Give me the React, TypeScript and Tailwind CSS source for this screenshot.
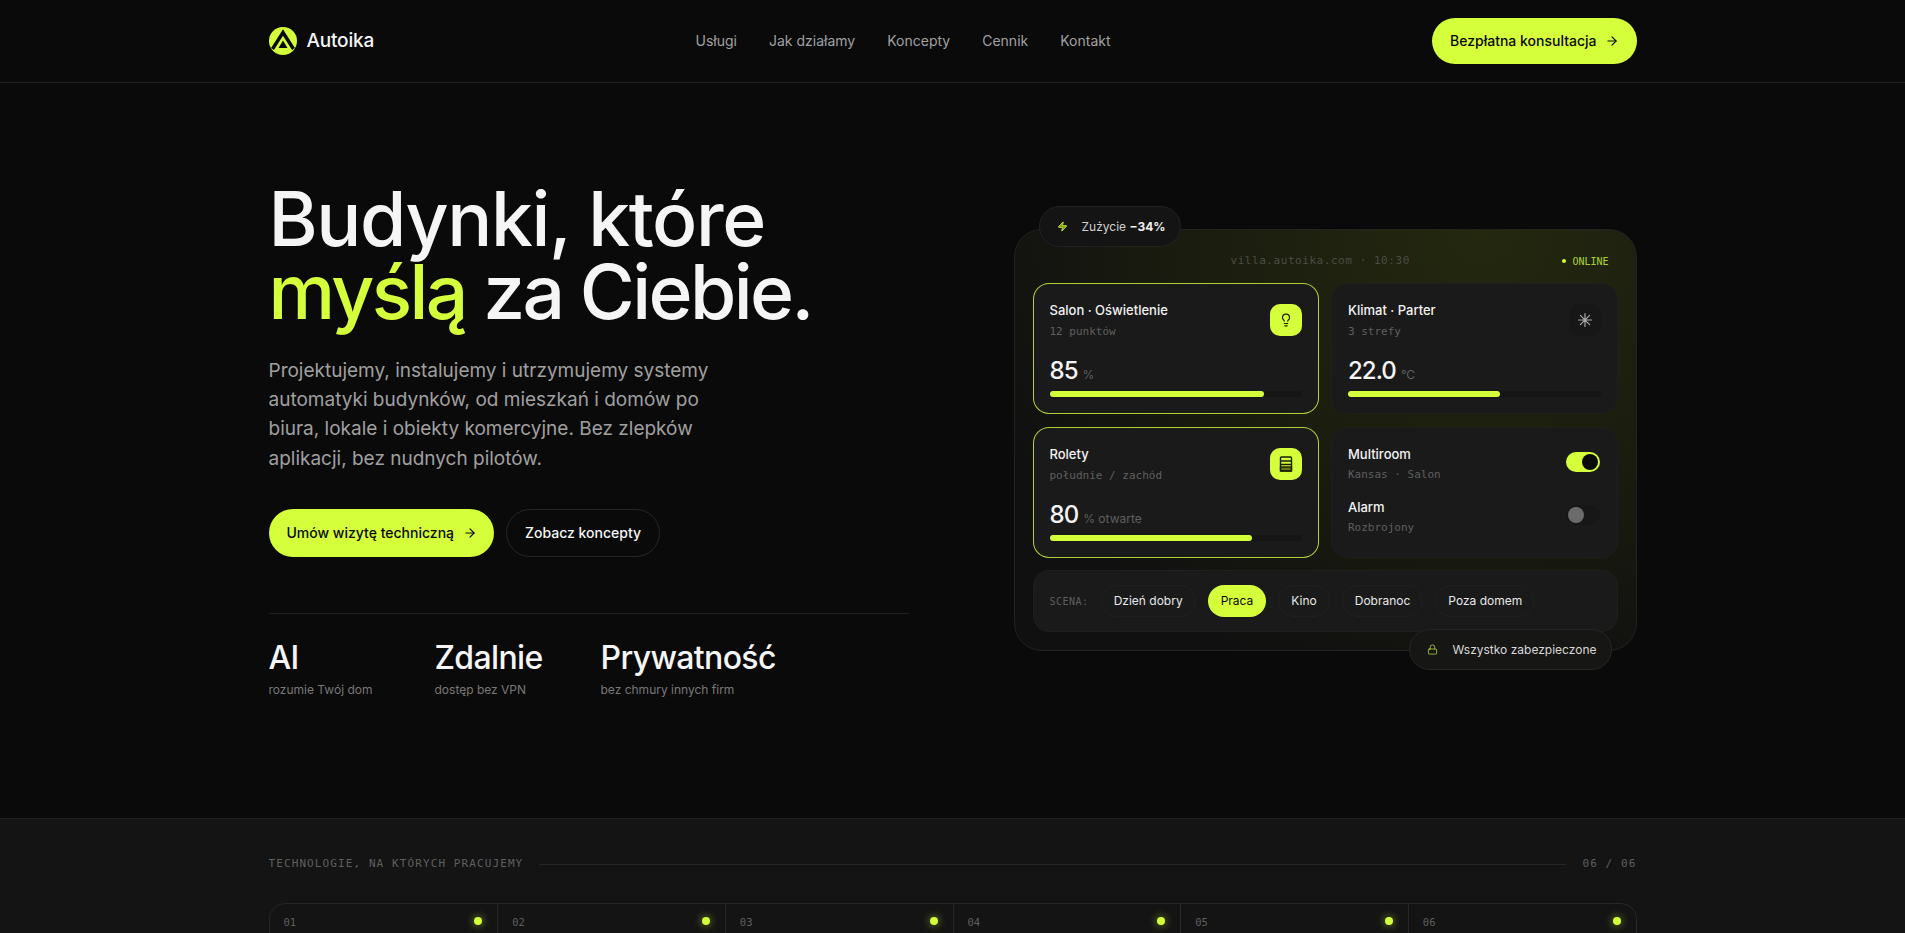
import { ArrowRight, Lightbulb, Lock, Zap } from "lucide-react";

const nav = ["Usługi", "Jak działamy", "Koncepty", "Cennik", "Kontakt"];
const scenes = ["Dzień dobry", "Praca", "Kino", "Dobranoc", "Poza domem"];
const stats = [
  { title: "AI", text: "rozumie Twój dom" },
  { title: "Zdalnie", text: "dostęp bez VPN" },
  { title: "Prywatność", text: "bez chmury innych firm" },
];
const techs = ["01", "02", "03", "04", "05", "06"];

const display = "font-['Inter',sans-serif]";
const mono = "font-['DejaVu_Sans_Mono',monospace]";

function Logo() {
  return (
    <svg width="28" height="28" viewBox="0 0 28 28">
      <circle cx="14" cy="14" r="14" fill="#d4ff3a" />
      <path d="M3.5 22 L14 5.5 L24.5 22" fill="none" stroke="#0a0a0a" strokeWidth="3.4" />
      <path d="M14 13.5 L18.5 21 H9.5 Z" fill="#0a0a0a" />
    </svg>
  );
}

function BlindsIcon() {
  return (
    <svg width="14" height="16" viewBox="0 0 14 16" fill="none" stroke="#1a1f08" strokeWidth="1.4">
      <rect x="1.5" y="1" width="11" height="14" rx="1" />
      <path d="M1.5 5h11M1.5 8.5h11" />
      <rect x="1.5" y="11" width="11" height="4" fill="#1a1f08" fillOpacity="0.6" />
    </svg>
  );
}

function ClimateIcon() {
  return (
    <svg width="16" height="16" viewBox="0 0 16 16" stroke="currentColor" strokeWidth="1.2" strokeLinecap="round">
      <path d="M8 1.5v13M1.5 8h13M3.4 3.4l9.2 9.2M12.6 3.4l-9.2 9.2" />
    </svg>
  );
}

function Bar({ pct }: { pct: number }) {
  return (
    <div className="mt-1 h-1.5 rounded-full bg-[#151515]">
      <div className="h-full rounded-full bg-[#d4ff3a]" style={{ width: `${pct}%` }} />
    </div>
  );
}

function Card({
  title,
  sub,
  value,
  unit,
  pct,
  active,
  icon,
}: {
  title: string;
  sub: string;
  value: string;
  unit: string;
  pct: number;
  active?: boolean;
  icon: React.ReactNode;
}) {
  return (
    <div
      className={`flex flex-col justify-between rounded-2xl border bg-[#1a1a1a] px-4 pb-4 pt-[20px] ${
        active ? "border-[#d4ff3a]/80" : "border-[#1f1f1f]"
      }`}
    >
      <div className="flex items-start justify-between">
        <div className="-mt-[3px]">
          <div className="text-[13px] font-medium leading-[18px] text-[#f2f2f2]">{title}</div>
          <div className={`${mono} mt-[5px] text-[11px] leading-[16px] text-[#5f5f5f]`}>{sub}</div>
        </div>
        <div
          className={`flex h-8 w-8 items-center justify-center rounded-[10px] ${
            active ? "bg-[#d4ff3a] text-[#1a1f08]" : "bg-[#171717] text-[#a8a8a8]"
          }`}
        >
          {icon}
        </div>
      </div>
      <div>
        <div className="flex items-baseline gap-[5px]">
          <span className={`${display} text-[24px] font-medium leading-[32px] tracking-[-0.04em] text-[#f5f5f5]`}>
            {value}
          </span>
          <span className="text-xs text-[#5f5f5f]">{unit}</span>
        </div>
        <Bar pct={pct} />
      </div>
    </div>
  );
}

function Toggle({ on }: { on?: boolean }) {
  return (
    <div
      className={`-mt-1 mr-[1px] flex h-5 w-[34px] items-center rounded-full p-[2px] ${
        on ? "justify-end bg-[#d4ff3a]" : "justify-start bg-[#171717]"
      }`}
    >
      <div className={`h-4 w-4 rounded-full ${on ? "bg-[#0a0a0a]" : "bg-[#6b6b6b]"}`} />
    </div>
  );
}

export default function App() {
  return (
    <div className="h-screen overflow-hidden bg-[#0a0a0a] font-['Inter',sans-serif] text-[#f5f5f5]">
      {/* Header */}
      <header className="border-b border-[#1f1f1f]">
        <div className="mx-auto flex h-[82px] w-[1368px] items-center justify-between">
          <div className="flex items-center gap-[10px]">
            <Logo />
            <span className={`${display} text-[19px] font-medium tracking-[-0.01em]`}>Autoika</span>
          </div>
          <nav className="flex gap-8">
            {nav.map((item) => (
              <a key={item} className="text-sm text-[#a0a0a0]">
                {item}
              </a>
            ))}
          </nav>
          <a className="-mr-px flex h-[46px] items-center gap-[9px] rounded-full bg-[#d4ff3a] px-[18px] text-sm font-medium text-[#0a0a0a]">
            Bezpłatna konsultacja
            <ArrowRight size={14} />
          </a>
        </div>
      </header>

      {/* Hero */}
      <section className="h-[735px]">
        <div className="mx-auto flex w-[1368px] justify-between">
          <div className="w-[640px] pt-[99px]">
            <h1 className={`${display} text-[75px] font-medium leading-[73px] tracking-[-0.035em]`}>
              <span className="tracking-[-1.4px]">Budynki, które</span>
              <br />
              <span className="text-[#d4ff3a]">myślą</span> za Ciebie.
            </h1>
            <p className="mt-[28px] w-[460px] text-[19px] leading-[29.2px] text-[#a0a0a0]">
              Projektujemy, instalujemy i utrzymujemy systemy automatyki budynków, od mieszkań i domów po biura, lokale
              i obiekty komercyjne. Bez zlepków aplikacji, bez nudnych pilotów.
            </p>
            <div className="mt-9 flex gap-3">
              <a className="flex h-12 items-center gap-[9px] rounded-full bg-[#d4ff3a] pl-[18px] pr-[17px] text-sm font-medium text-[#0a0a0a]">
                Umów wizytę techniczną
                <ArrowRight size={14} />
              </a>
              <a className="flex h-12 items-center rounded-full border border-[#262626] px-[18px] text-sm font-medium text-[#f5f5f5]">
                Zobacz koncepty
              </a>
            </div>
            <div className="mt-14 grid grid-cols-[166px_166px_auto] border-t border-[#1f1f1f] pt-[26px]">
              {stats.map((s) => (
                <div key={s.title}>
                  <div className={`${display} text-[32px] font-medium leading-[36px] tracking-[-0.02em]`}>{s.title}</div>
                  <div className="mt-[6px] text-xs text-[#787878]">{s.text}</div>
                </div>
              ))}
            </div>
          </div>

          {/* Dashboard mock */}
          <div className="relative mt-[146px] h-[422px] w-[623px] rounded-[28px] border border-[#222222] bg-[radial-gradient(ellipse_at_75%_0%,#24280f_0%,#1a1c0f_45%,#101010_80%)] px-[18px] pt-[16px]">
            <div className="absolute -top-[24px] left-[24px] flex h-[41px] items-center gap-[14px] rounded-full border border-[#222222] bg-[#141414] pl-[17px] pr-[14px] text-xs text-[#d0d0d0]">
              <Zap size={11} className="fill-[#d4ff3a]/60 text-[#d4ff3a]/80" />
              <span>
                Zużycie <strong className="font-bold text-[#f0f0f0]">−34%</strong>
              </span>
            </div>

            <div className={`${mono} flex h-[30px] items-center justify-between`}>
              <span className="ml-[198px] text-[11px] tracking-[0.05em] text-[#4c4c46]">villa.autoika.com · 10:30</span>
              <span className="mr-[9px] flex items-center gap-[6px] text-[10px] text-[#d4ff3a]/80">
                <span className="h-1 w-1 rounded-full bg-[#d4ff3a]" />
                ONLINE
              </span>
            </div>

            <div className="mt-[7px] grid grid-cols-2 grid-rows-[131px_131px] gap-x-3 gap-y-[13px]">
              <Card
                active
                title="Salon · Oświetlenie"
                sub="12 punktów"
                value="85"
                unit="%"
                pct={85}
                icon={<Lightbulb size={14} />}
              />
              <Card title="Klimat · Parter" sub="3 strefy" value="22.0" unit="°C" pct={60} icon={<ClimateIcon />} />
              <Card
                active
                title="Rolety"
                sub="południe / zachód"
                value="80"
                unit="% otwarte"
                pct={80}
                icon={<BlindsIcon />}
              />
              <div className="flex flex-col gap-[15px] rounded-2xl border border-[#1f1f1f] bg-[#1a1a1a] px-4 pt-[17px]">
                <div className="flex items-center justify-between">
                  <div>
                    <div className="text-[13px] font-medium leading-[18px] text-[#f2f2f2]">Multiroom</div>
                    <div className={`${mono} mt-1 text-[11px] leading-[16px] text-[#5f5f5f]`}>Kansas · Salon</div>
                  </div>
                  <Toggle on />
                </div>
                <div className="flex items-center justify-between">
                  <div>
                    <div className="text-[13px] font-medium leading-[18px] text-[#f2f2f2]">Alarm</div>
                    <div className={`${mono} mt-1 text-[11px] leading-[16px] text-[#5f5f5f]`}>Rozbrojony</div>
                  </div>
                  <Toggle />
                </div>
              </div>
            </div>

            <div className="mt-3 flex h-[62px] items-center gap-[12px] rounded-2xl border border-[#1f1f1f] bg-[#1a1a1a] px-4">
              <span className={`${mono} text-[10px] tracking-[0.05em] text-[#5f5f5f]`}>SCENA:</span>
              {scenes.map((scene) => (
                <span
                  key={scene}
                  className={`flex h-8 items-center rounded-full text-xs ${
                    scene === "Praca"
                      ? "bg-[#d4ff3a] px-[13px] text-[#0a0a0a]"
                      : "border border-[#202020] px-3 text-[#e8e8e8]"
                  }`}
                >
                  {scene}
                </span>
              ))}
            </div>

            <div className="absolute -bottom-[20px] right-[24px] flex h-[41px] items-center gap-[14px] rounded-full border border-[#262626] bg-[#161614] pl-[17px] pr-[14px] text-xs text-[#d8d8d8]">
              <Lock size={11} className="text-[#d4ff3a]/70" />
              Wszystko zabezpieczone
            </div>
          </div>
        </div>
      </section>

      {/* Technologies */}
      <section className="border-t border-[#1f1f1f] bg-[#141414]">
        <div className="mx-auto w-[1368px] pt-[37px]">
          <div className={`${mono} flex items-center gap-4 text-[11px] tracking-[0.1em] text-[#5f5f5f]`}>
            <span>TECHNOLOGIE, NA KTÓRYCH PRACUJEMY</span>
            <div className="h-px flex-1 bg-[#262626]" />
            <span>06 / 06</span>
          </div>
          <div className="mt-[30px] grid grid-cols-6 rounded-t-2xl border border-[#262626]">
            {techs.map((t, i) => (
              <div
                key={t}
                className={`flex h-[120px] items-start justify-between pl-[14px] pr-[15px] pt-[11px] ${
                  i > 0 ? "border-l border-[#262626]" : ""
                }`}
              >
                <span className={`${mono} text-[10.5px] text-[#5f5f5f]`}>{t}</span>
                <span className="mt-[2px] h-2 w-2 rounded-full bg-[#d4ff3a] shadow-[0_0_8px_rgba(212,255,58,0.6)]" />
              </div>
            ))}
          </div>
        </div>
      </section>
    </div>
  );
}
